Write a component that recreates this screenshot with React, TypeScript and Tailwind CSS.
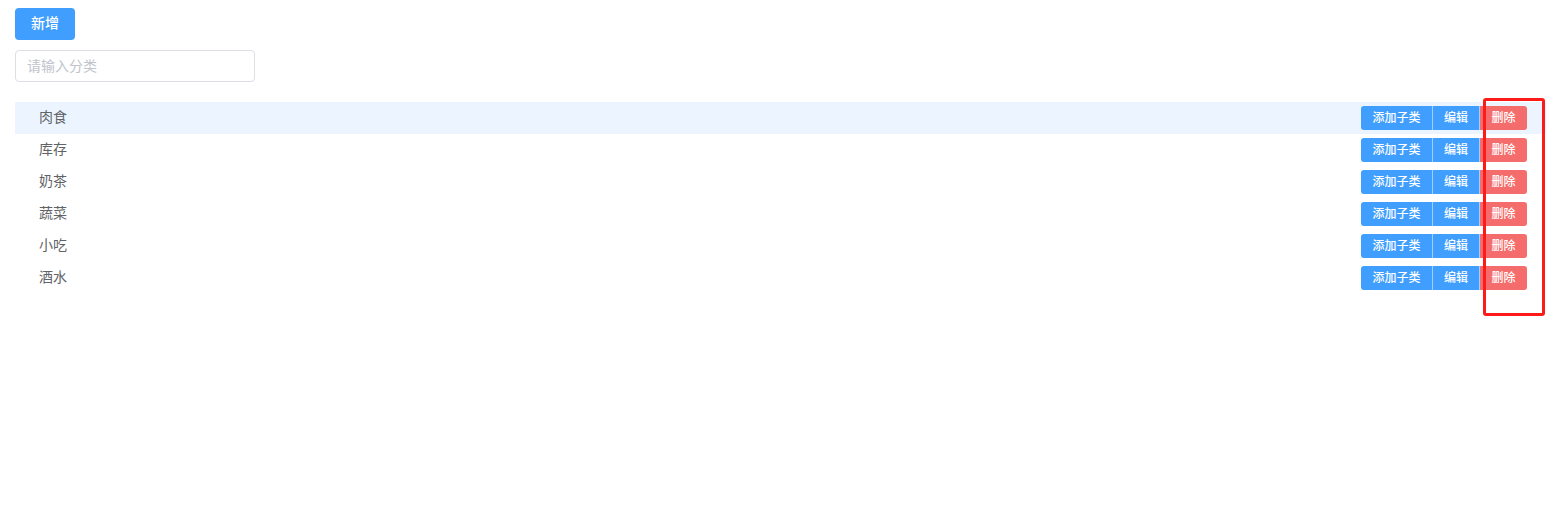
import React from "react";

const categories = ["肉食", "库存", "奶茶", "蔬菜", "小吃", "酒水"];

export default function App() {
  return (
    <div
      className="relative min-h-[518px] bg-white px-[15px] pt-2 text-[14px] text-[#606266]"
      style={{ fontFamily: '"Noto Sans CJK SC", "Noto Sans", sans-serif' }}
    >
      <button className="h-8 w-[60px] rounded bg-[#409eff] pb-1 text-[14px] font-medium leading-none text-white">
        新增
      </button>

      <div className="mt-2.5">
        <input
          placeholder="请输入分类"
          className="h-8 w-[240px] rounded border border-[#dcdfe6] px-[11px] pb-0.5 text-[14px] text-[#606266] outline-none placeholder:text-[#c0c4cc]"
        />
      </div>

      <div className="mt-5 mr-[5px]">
        {categories.map((name, i) => (
          <div
            key={name}
            className={`flex h-8 items-center justify-between pl-6 pr-[19px] ${
              i === 0 ? "bg-[#ecf5ff]" : ""
            }`}
          >
            <span className="mb-1 text-[14px] leading-none">{name}</span>
            <div className="flex h-6 text-[12px] font-medium leading-none text-white">
              <button className="w-[72px] rounded-l-[3px] border-r border-[#ffffff80] bg-[#409eff] pb-0.5">
                添加子类
              </button>
              <button className="w-[47px] border-r border-[#ffffff80] bg-[#409eff] pb-0.5">编辑</button>
              <button className="w-[47px] rounded-r-[3px] bg-[#f56c6c] pb-0.5">删除</button>
            </div>
          </div>
        ))}
      </div>

      <div className="absolute left-[1483px] top-[98px] h-[218px] w-[62px] rounded-[3px] border-[3px] border-[#ff1a1a]" />
    </div>
  );
}
